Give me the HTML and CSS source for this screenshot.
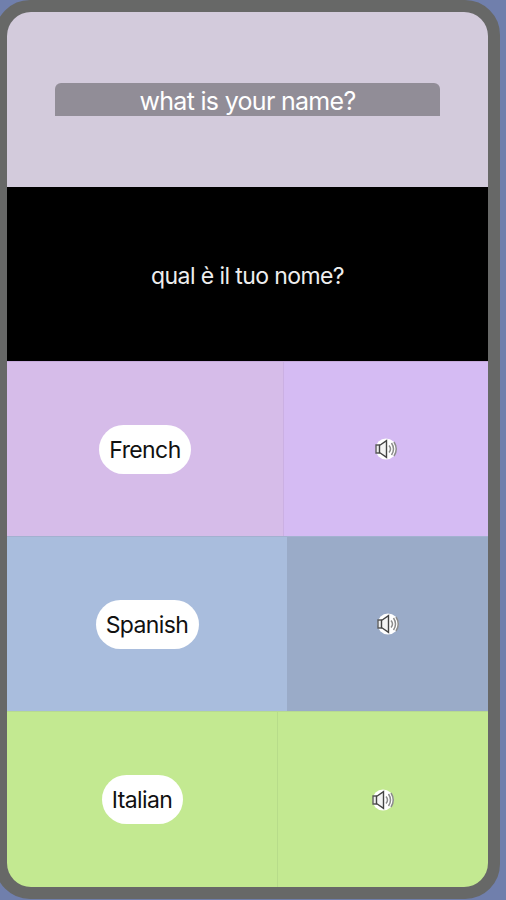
FILE: index.html
```html
<!DOCTYPE html>
<html lang="en">
<head>
<meta charset="utf-8">
<title>Translator</title>
<link rel="stylesheet" href="styles.css">
</head>
<body>
<svg class="symbols" aria-hidden="true">
  <symbol id="speaker" viewBox="0 0 24 22">
    <circle cx="12" cy="11" r="10.5" fill="#fff"/>
    <path d="M6 7H2v8h4" fill="#eee" stroke="#555" stroke-width="1.3"/>
    <path d="M5.5 7.5l7-4.8v16.600l-7-4.800z" fill="#f4f4f4" stroke="#444" stroke-width="1.4"/>
    <path d="M15 7.500q3 3.500 0 7M17.500 5q4 6 0 12M20 4q4.500 7 0 14" fill="none" stroke="#8c8c8c" stroke-width="1.500"/>
  </symbol>
</svg>
<main class="phone">
  <div class="screen">
    <section class="source"><div class="entry"><span class="phrase">what is your name?</span></div></section>
    <section class="result"><span class="answer">qual è il tuo nome?</span></section>
    <section class="language french">
      <div class="choice"><button class="pill"><span>French</span></button></div>
      <div class="listen"><svg class="speaker"><use href="#speaker"/></svg></div>
    </section>
    <section class="language spanish">
      <div class="choice"><button class="pill"><span>Spanish</span></button></div>
      <div class="listen"><svg class="speaker"><use href="#speaker"/></svg></div>
    </section>
    <section class="language italian">
      <div class="choice"><button class="pill"><span>Italian</span></button></div>
      <div class="listen"><svg class="speaker"><use href="#speaker"/></svg></div>
    </section>
  </div>
</main>
</body>
</html>
```
FILE: styles.css
```css
* { box-sizing: border-box; }
body {
  margin: 0;
  height: 900px;
  overflow: hidden;
  background: #707fac;
  font-family: Inter, "Liberation Sans", sans-serif;
}
.symbols { display: none; }
.phone {
  width: 505px;
  height: 899px;
  margin-left: -5px;
  border: 12px solid #676867;
  border-radius: 35px;
  background: #676867;
}
.screen {
  display: grid;
  grid-template-rows: 175px 174px 175px 175px 176px;
  height: 875px;
  border-radius: 24px;
  overflow: hidden;
}
.source, .result, .choice, .listen {
  display: flex;
  align-items: center;
  justify-content: center;
}
.source { background: #d3cbdc; }
.entry {
  display: flex;
  align-items: center;
  justify-content: center;
  width: 385px;
  height: 33px;
  border-radius: 6px 6px 0 0;
  background: #918d97;
  color: #fff;
}
.phrase { padding-top: 2px; font-size: 25px; letter-spacing: -0.7px; white-space: nowrap; }
.result { background: #000; color: #eee; }
.answer { padding-top: 3px; font-size: 23px; letter-spacing: -0.6px; white-space: nowrap; }
.language { display: grid; }
.french { grid-template-columns: 276px 1fr; background: #d6bce9; border-top: 1px solid #c6a9dc; }
.french .listen { background: #d5bbf3; border-left: 1px solid #cbb0e3; }
.spanish { grid-template-columns: 280px 1fr; background: #a9bddd; border-top: 1px solid #a3b1d0; }
.spanish .listen { background: #9aabc8; }
.italian { grid-template-columns: 270px 1fr; background: #c3e991; border-top: 1px solid #b7da91; }
.italian .listen { border-left: 1px solid #b7dc8a; }
.pill {
  display: flex;
  align-items: center;
  justify-content: center;
  width: 92px;
  height: 49px;
  padding: 2px 0 0;
  border: 0;
  border-radius: 25px;
  background: #fff;
  color: #111;
  font: 23px Inter, "Liberation Sans", sans-serif;
  letter-spacing: -0.6px;
}
.spanish .pill { width: 103px; }
.italian .pill { width: 81px; padding-top: 0; }
.speaker { width: 24px; height: 22px; }
```
